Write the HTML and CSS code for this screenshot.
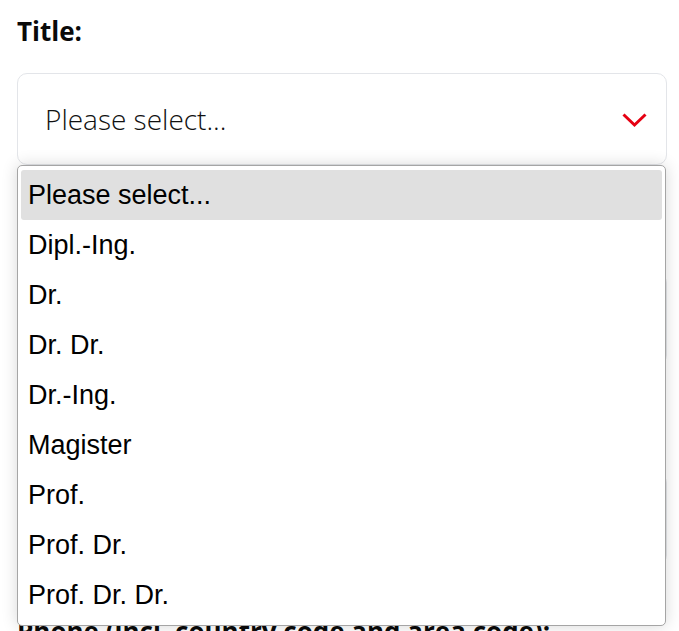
FILE: index.html
```html
<!DOCTYPE html>
<html lang="en">
<head>
<meta charset="utf-8">
<title>Title select</title>
<link rel="stylesheet" href="styles.css">
</head>
<body>
<form class="form">
  <div class="field">
    <label class="label">Title:</label>
    <div class="select-wrap">
      <div class="select">
        <span class="select-text">Please select...</span>
        <svg class="chevron" width="25" height="15" viewBox="0 0 25 15"><polyline points="1.5,1.5 12.5,12 23.5,1.5" fill="none" stroke="#e60012" stroke-width="3"/></svg>
      </div>
      <ul class="listbox">
        <li class="option active">Please select...</li>
        <li class="option">Dipl.-Ing.</li>
        <li class="option">Dr.</li>
        <li class="option">Dr. Dr.</li>
        <li class="option">Dr.-Ing.</li>
        <li class="option">Magister</li>
        <li class="option">Prof.</li>
        <li class="option">Prof. Dr.</li>
        <li class="option">Prof. Dr. Dr.</li>
      </ul>
    </div>
  </div>
  <div class="field">
    <div class="label-space"></div>
    <div class="select"></div>
  </div>
  <div class="field">
    <div class="label-space"></div>
    <div class="select"></div>
  </div>
  <div class="field">
    <label class="label">Phone (incl. country code and area code):</label>
    <div class="select"></div>
  </div>
</form>
</body>
</html>
```

FILE: styles.css
```css
html, body {
  margin: 0;
  padding: 0;
  background: #ffffff;
}

body {
  font-family: "Open Sans", "Liberation Sans", sans-serif;
  color: #000;
  overflow: hidden;
}

.form {
  display: flex;
  flex-direction: column;
  gap: 47px;
  padding: 12px 12px 0 17px;
}

.field {
  display: flex;
  flex-direction: column;
  gap: 23px;
}

.label {
  font-weight: 700;
  font-size: 26px;
  line-height: 38px;
  color: #0a0a0a;
  white-space: nowrap;
}

.label-space {
  height: 38px;
}

.select-wrap {
  position: relative;
}

.select {
  box-sizing: border-box;
  height: 92px;
  border: 1px solid #e3e5e9;
  border-radius: 10px;
  background: #fff;
  display: flex;
  align-items: center;
  justify-content: space-between;
  padding: 0 19px 0 27px;
}

.select-text {
  font-size: 28px;
  font-weight: 300;
  line-height: 38px;
  color: #111;
}

.chevron {
  display: block;
  margin-top: 2px;
}

.listbox {
  position: absolute;
  top: 100%;
  left: 0;
  right: 1px;
  margin: 0;
  padding: 4px 3px 5px;
  list-style: none;
  background: #fff;
  border: 1px solid #a5a5a5;
  border-radius: 5px;
  box-shadow: 0 0 16px rgba(0, 0, 0, 0.16);
  z-index: 2;
}

.option {
  height: 50px;
  display: flex;
  align-items: center;
  padding: 1px 7px 0;
  box-sizing: border-box;
  font-family: "Liberation Sans", Arial, sans-serif;
  font-size: 27px;
  color: #000;
  border-radius: 3px;
}

.option.active {
  background: #e0e0e0;
}
```
